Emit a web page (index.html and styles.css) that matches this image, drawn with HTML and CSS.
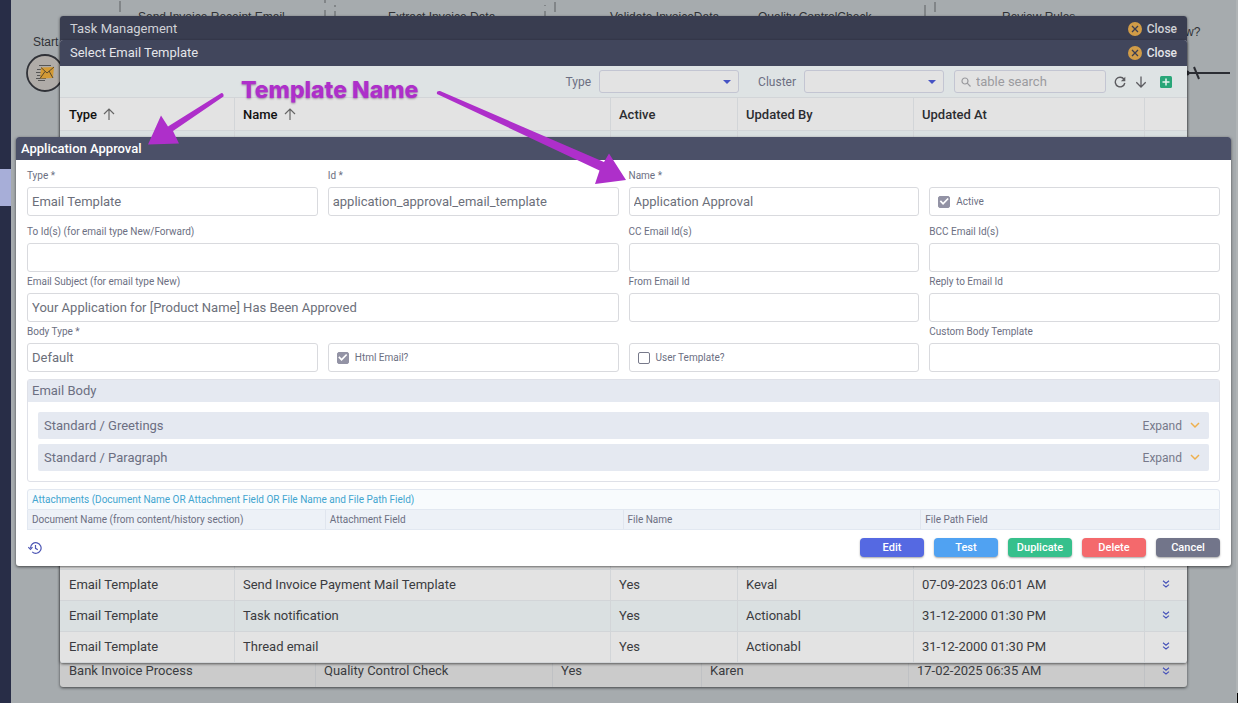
FILE: index.html
```html
<!DOCTYPE html>
<html lang="en">

<head>
    <meta charset="UTF-8">
    <meta name="viewport" content="width=device-width, initial-scale=1.0">
    <title>Application Approval</title>
    <link rel="stylesheet" href="styles.css">
</head>

<body>
    <!-- Shared icons -->
    <svg class="icon-defs" aria-hidden="true">
        <symbol id="icon-close" viewBox="0 0 14 14">
            <circle cx="7" cy="7" r="7" fill="#d19c47" />
            <path d="M4 4l6 6M10 4l-6 6" stroke="#3a3d50" stroke-width="1.3" />
        </symbol>
        <symbol id="icon-up" viewBox="0 0 12 12">
            <path d="M6 12V1M1 6l5-5 5 5" fill="none" stroke="#666" stroke-width="1.2" />
        </symbol>
        <symbol id="icon-more" viewBox="0 0 8 8">
            <path d="M1 .8l3 2.4L7 .8M1 4.6L4 7l3-2.4" fill="none" stroke="#4450b8" stroke-width="1.1" />
        </symbol>
        <symbol id="icon-chevron" viewBox="0 0 10 7">
            <path d="M1 1l4 4 4-4" fill="none" stroke="#eeb04d" stroke-width="1.5" />
        </symbol>
        <symbol id="icon-caret" viewBox="0 0 8 4">
            <path d="M0 0h8L4 4z" fill="#4653c4" />
        </symbol>
    </svg>

    <!-- Workflow page behind the dialogs -->
    <div class="page">
        <nav class="sidebar">
            <a href="#" class="sidebar-active" aria-label="Workflows"></a>
        </nav>
        <main class="canvas">
            <svg class="flow" width="1225" height="120">
                <g stroke="#75797c" stroke-width="1.5">
                    <path d="M109 1v11M314 0v3M314 10v6M324 5v2M324 11v5M534 5v1M534 11v5M544 2v10M914 5v11M924 2v10" />
                </g>
                <text x="127" y="21">Send Invoice Receipt Email</text>
                <text x="377" y="21">Extract Invoice Data</text>
                <text x="599" y="21">Validate InvoiceData</text>
                <text x="747" y="21">Quality ControlCheck</text>
                <text x="991" y="21">Review Rules</text>
                <text x="22" y="46">Start</text>
                <text x="1174" y="36">w?</text>
                <circle cx="34" cy="73" r="18" fill="#b0aca8" stroke="#303238" stroke-width="1.8" />
                <path d="M28 65.500h12M26 69.500h5M25 72.500h6M26 75.500h5M25 78.500h10M27 80.500h7" stroke="#555" />
                <path d="M30 67.500l13-.5-1 11-13 .5z" fill="#d39a35" />
                <path d="M30 67.500l6 5.500 7-6M29 78.500l5-7M42 78l-4-7" fill="none" stroke="#4b3f2c" stroke-width=".9" />
                <path d="M1173 73h46" stroke="#2b2d33" stroke-width="2" />
                <path d="M1183 67l5 12" stroke="#2b2d33" stroke-width="2" />
                <circle cx="1176" cy="73" r="2.500" fill="#2b2d33" />
            </svg>
        </main>
    </div>

    <!-- Task management dialog -->
    <section class="modal modal-task">
        <header class="modal-header">
            <h2>Task Management</h2>
            <button type="button" class="close-btn"><svg width="14" height="14"><use href="#icon-close" /></svg>Close</button>
        </header>
        <div class="modal-fill"></div>
        <table class="data-table task-table">
            <colgroup>
                <col class="task-process">
                <col class="task-name">
                <col class="task-active">
                <col class="task-user">
                <col>
                <col class="col-more">
            </colgroup>
            <tbody>
                <tr>
                    <td>Bank Invoice Process</td>
                    <td>Quality Control Check</td>
                    <td>Yes</td>
                    <td>Karen</td>
                    <td>17-02-2025 06:35 AM</td>
                    <td class="more"><svg width="8" height="8"><use href="#icon-more" /></svg></td>
                </tr>
            </tbody>
        </table>
    </section>

    <!-- Email template list dialog -->
    <section class="modal modal-list">
        <header class="modal-header">
            <h2>Select Email Template</h2>
            <button type="button" class="close-btn"><svg width="14" height="14"><use href="#icon-close" /></svg>Close</button>
        </header>
        <div class="toolbar">
            <label for="filter-type">Type</label>
            <div class="select-box">
                <select id="filter-type"><option></option></select>
                <svg width="8" height="4"><use href="#icon-caret" /></svg>
            </div>
            <label for="filter-cluster" class="label-cluster">Cluster</label>
            <div class="select-box">
                <select id="filter-cluster"><option></option></select>
                <svg width="8" height="4"><use href="#icon-caret" /></svg>
            </div>
            <div class="search-box">
                <svg width="10" height="10" viewBox="0 0 10 10"><circle cx="4" cy="4" r="3" fill="none" stroke="#9a9a9e" stroke-width="1.200" /><path d="M6.200 6.200L9.500 9.500" stroke="#9a9a9e" stroke-width="1.200" /></svg>
                <input type="search" placeholder="table search" aria-label="table search">
            </div>
            <div class="tools">
                <button type="button" aria-label="Refresh"><svg width="12" height="12" viewBox="0 0 12 12"><path d="M10 3.200A4.800 4.800 0 1 0 10.800 7" fill="none" stroke="#5c5c60" stroke-width="1.400" /><path d="M11.300.8v4.400H6.900z" fill="#5c5c60" /></svg></button>
                <button type="button" aria-label="Download"><svg width="12" height="12" viewBox="0 0 12 12"><path d="M6 .5v10.500M1.300 6.300L6 11l4.700-4.700" fill="none" stroke="#5c5c60" stroke-width="1.300" /></svg></button>
                <button type="button" class="add-btn" aria-label="Add"><svg width="12" height="12" viewBox="0 0 12 12"><rect width="12" height="12" rx="1.500" fill="#29a678" /><path d="M6 2.500v7M2.500 6h7" stroke="#e8f3ee" stroke-width="1.500" /></svg></button>
            </div>
        </div>
        <table class="data-table list-table">
            <colgroup>
                <col class="list-type">
                <col>
                <col class="list-active">
                <col class="list-user">
                <col class="list-date">
                <col class="col-more">
            </colgroup>
            <thead>
                <tr>
                    <th class="sorted">Type <svg width="12" height="12"><use href="#icon-up" /></svg></th>
                    <th class="sorted">Name <svg width="12" height="12"><use href="#icon-up" /></svg></th>
                    <th>Active</th>
                    <th>Updated By</th>
                    <th>Updated At</th>
                    <th></th>
                </tr>
            </thead>
            <tbody>
                <tr class="striped"><td></td><td></td><td></td><td></td><td></td><td></td></tr>
                <tr class="filler"><td></td><td></td><td></td><td></td><td></td><td></td></tr>
                <tr>
                    <td>Email Template</td>
                    <td>Send Invoice Payment Mail Template</td>
                    <td>Yes</td>
                    <td>Keval</td>
                    <td>07-09-2023 06:01 AM</td>
                    <td class="more"><svg width="8" height="8"><use href="#icon-more" /></svg></td>
                </tr>
                <tr class="striped">
                    <td>Email Template</td>
                    <td>Task notification</td>
                    <td>Yes</td>
                    <td>Actionabl</td>
                    <td>31-12-2000 01:30 PM</td>
                    <td class="more"><svg width="8" height="8"><use href="#icon-more" /></svg></td>
                </tr>
                <tr>
                    <td>Email Template</td>
                    <td>Thread email</td>
                    <td>Yes</td>
                    <td>Actionabl</td>
                    <td>31-12-2000 01:30 PM</td>
                    <td class="more"><svg width="8" height="8"><use href="#icon-more" /></svg></td>
                </tr>
            </tbody>
        </table>
    </section>

    <!-- Template details dialog -->
    <section class="modal modal-details">
        <header class="modal-header">
            <h2>Application Approval</h2>
        </header>
        <form class="details-form">
            <div class="row row-first">
                <div class="field">
                    <label for="type">Type *</label>
                    <input type="text" id="type" value="Email Template" readonly>
                </div>
                <div class="field">
                    <label for="template-id">Id *</label>
                    <input type="text" id="template-id" value="application_approval_email_template" readonly>
                </div>
                <div class="field">
                    <label for="name">Name *</label>
                    <input type="text" id="name" value="Application Approval" readonly>
                </div>
                <label class="check-field"><input type="checkbox" checked>Active</label>
            </div>
            <div class="row">
                <div class="field wide">
                    <label for="to">To Id(s) (for email type New/Forward)</label>
                    <input type="text" id="to" readonly>
                </div>
                <div class="field">
                    <label for="cc">CC Email Id(s)</label>
                    <input type="text" id="cc" readonly>
                </div>
                <div class="field">
                    <label for="bcc">BCC Email Id(s)</label>
                    <input type="text" id="bcc" readonly>
                </div>
            </div>
            <div class="row">
                <div class="field wide">
                    <label for="subject">Email Subject (for email type New)</label>
                    <input type="text" id="subject" value="Your Application for [Product Name] Has Been Approved" readonly>
                </div>
                <div class="field">
                    <label for="from">From Email Id</label>
                    <input type="text" id="from" readonly>
                </div>
                <div class="field">
                    <label for="reply">Reply to Email Id</label>
                    <input type="text" id="reply" readonly>
                </div>
            </div>
            <div class="row">
                <div class="field">
                    <label for="body-type">Body Type *</label>
                    <input type="text" id="body-type" value="Default" readonly>
                </div>
                <label class="check-field"><input type="checkbox" checked>Html Email?</label>
                <label class="check-field"><input type="checkbox">User Template?</label>
                <div class="field">
                    <label for="custom-body">Custom Body Template</label>
                    <input type="text" id="custom-body" readonly>
                </div>
            </div>

            <div class="email-body">
                <h3>Email Body</h3>
                <div class="block">
                    <span>Standard / Greetings</span>
                    <button type="button">Expand<svg width="10" height="7"><use href="#icon-chevron" /></svg></button>
                </div>
                <div class="block">
                    <span>Standard / Paragraph</span>
                    <button type="button">Expand<svg width="10" height="7"><use href="#icon-chevron" /></svg></button>
                </div>
            </div>

            <table class="attachments">
                <caption>Attachments (Document Name OR Attachment Field OR File Name and File Path Field)</caption>
                <thead>
                    <tr>
                        <th>Document Name (from content/history section)</th>
                        <th>Attachment Field</th>
                        <th>File Name</th>
                        <th>File Path Field</th>
                    </tr>
                </thead>
            </table>

            <footer class="actions">
                <button type="button" class="history-btn" aria-label="History"><svg width="14" height="12" viewBox="0 0 14 12"><path d="M2.500 6a5.300 5.300 0 1 1 1.700 3.900M.3 5.200l2.200 2.200 2-2.200M7.500 3v3.300l2.300 1.400" fill="none" stroke="#4f58b5" stroke-width="1.200" /></svg></button>
                <button type="button" class="btn btn-edit">Edit</button>
                <button type="button" class="btn btn-test">Test</button>
                <button type="button" class="btn btn-duplicate">Duplicate</button>
                <button type="button" class="btn btn-delete">Delete</button>
                <button type="button" class="btn btn-cancel">Cancel</button>
            </footer>
        </form>
    </section>

    <!-- Callout over the dialogs -->
    <div class="callout">
        <strong>Template Name</strong>
        <svg width="640" height="190">
            <path d="M221.500 93Q224 93 223.500 96.500L173 131 179 143.500 148 144.500 161 115.500 168 126.500z" />
            <path d="M437 94Q436 90.500 440 91L604 162 609 153.500 626 180 595 184 599.500 170.500z" />
        </svg>
    </div>
</body>

</html>
```
FILE: styles.css
```css
/* General */
* {
    box-sizing: border-box;
}

body {
    font-family: Roboto, "Liberation Sans", sans-serif;
    font-size: 13px;
    color: #6c6f82;
    margin: 0;
    height: 100vh;
    overflow: hidden;
    position: relative;
}

h2,
h3 {
    margin: 0;
    font-size: 13px;
    font-weight: 400;
}

button,
input,
select {
    font-family: inherit;
}

button {
    border: none;
    background: none;
    padding: 0;
    cursor: pointer;
}

svg {
    display: block;
}

.icon-defs {
    display: none;
}

/* Page behind */
.page {
    display: flex;
    height: 100%;
}

.page::after {
    content: "";
    position: absolute;
    right: 0;
    bottom: 0;
    width: 1px;
    height: 10px;
    background-color: #000;
}

.sidebar {
    width: 11px;
    padding-top: 169px;
    background-color: #282d47;
}

.sidebar-active {
    display: block;
    height: 37px;
    background-color: #a7aed8;
}

.canvas {
    flex: 1;
    overflow: hidden;
    border-right: 2px solid #b0b4b6;
    background-color: #a6abae;
}

.flow text {
    font-family: "Liberation Sans", Arial, sans-serif;
    font-size: 12px;
    fill: #303236;
}

/* Dialogs */
.modal {
    position: absolute;
    display: flex;
    flex-direction: column;
    border-radius: 3px;
    overflow: hidden;
    box-shadow: 0 1px 3px rgba(0, 0, 0, 0.6);
}

.modal-task {
    top: 16px;
    left: 60px;
    right: 51px;
    bottom: 16px;
    background-color: #cbcbcb;
}

.modal-list {
    top: 40px;
    left: 60px;
    right: 51px;
    bottom: 40px;
    background-color: #e3e3e3;
}

.modal-details {
    top: 137px;
    left: 16px;
    right: 7px;
    background-color: #fff;
}

.modal-header {
    display: flex;
    justify-content: space-between;
    align-items: center;
    height: 26px;
    padding: 0 10px;
    color: #e4e5ea;
    background-color: #41465c;
}

.modal-header h2 {
    padding-bottom: 1px;
}

.modal-task .modal-header {
    color: #d0d1d6;
    background-color: #393d50;
}

.modal-details .modal-header {
    height: 23px;
    padding: 0 5px;
    color: #fff;
    background-color: #4b5068;
}

.modal-details h2 {
    padding-bottom: 0;
    font-weight: 500;
}

.close-btn {
    display: flex;
    align-items: center;
    gap: 5px;
    font-size: 12px;
    font-weight: 500;
    color: inherit;
}

.modal-fill {
    flex: 1;
}

/* Toolbar */
.toolbar {
    display: flex;
    justify-content: flex-end;
    align-items: center;
    height: 31px;
    padding-right: 15px;
    background-color: #dee3e4;
}

.toolbar label {
    font-size: 12px;
}

.toolbar .label-cluster {
    margin-left: 19px;
}

.select-box {
    position: relative;
    margin-left: 8px;
}

.select-box select {
    display: block;
    appearance: none;
    width: 140px;
    height: 23px;
    border: 1px solid #c3c5d2;
    border-radius: 3px;
    background-color: #e3e3e3;
}

.select-box svg {
    position: absolute;
    top: 10px;
    right: 8px;
    pointer-events: none;
}

.search-box {
    display: flex;
    align-items: center;
    gap: 5px;
    width: 152px;
    height: 23px;
    margin-left: 10px;
    padding-left: 6px;
    border: 1px solid #c3c5d2;
    border-radius: 3px;
    background-color: #e3e3e3;
}

.search-box input {
    width: 120px;
    padding: 0;
    border: none;
    outline: none;
    background: none;
    font-size: 13px;
}

.search-box input::placeholder {
    color: #9b9b9f;
}

.tools {
    display: flex;
    gap: 9px;
    margin-left: 8px;
}

.add-btn {
    margin-left: 4px;
}

/* Tables */
.data-table {
    width: 100%;
    table-layout: fixed;
    border-collapse: separate;
    border-spacing: 0;
    color: #3a3b40;
}

.data-table th,
.data-table td {
    height: 31px;
    padding: 0 8px;
    border-right: 1px solid #d2d5d8;
    border-bottom: 1px solid #d2d5d8;
    text-align: left;
}

.data-table td {
    padding-bottom: 2px;
}

.data-table th {
    height: 34px;
    border-top: 1px solid #d2d5d8;
    font-weight: 500;
    color: #2c2d31;
}

.data-table tr > :first-child {
    padding-left: 9px;
}

.data-table tr > :last-child {
    border-right: none;
}

.data-table .sorted {
    color: #111;
}

.data-table .sorted svg {
    display: inline-block;
    margin-left: 3px;
    vertical-align: -1px;
}

.data-table .more svg {
    margin: 0 auto;
}

.striped {
    background-color: #dae0e1;
}

.list-table {
    flex: 1;
}

.list-table .filler td {
    height: auto;
}

.list-type {
    width: 175px;
}

.list-active {
    width: 127px;
}

.list-user {
    width: 176px;
}

.list-date {
    width: 231px;
}

.col-more {
    width: 42px;
}

.task-table td {
    border-bottom: none;
    border-color: #bfc1c4;
}

.task-process {
    width: 256px;
}

.task-name {
    width: 237px;
}

.task-active {
    width: 149px;
}

.task-user {
    width: 207px;
}

/* Details form */
.details-form {
    padding: 10px 11px 9px;
}

.row {
    display: grid;
    grid-template-columns: repeat(4, 1fr);
    gap: 10px;
    align-items: end;
    margin-bottom: 4px;
}

.row-first {
    margin-bottom: 10px;
}

.field {
    display: flex;
    flex-direction: column;
    gap: 5px;
    min-width: 0;
}

.wide {
    grid-column: span 2;
}

.field label {
    font-size: 10px;
    line-height: 12px;
}

.field input,
.check-field {
    width: 100%;
    height: 29px;
    border: 1px solid #d9dade;
    border-radius: 3px;
}

.field input {
    padding: 0 4px;
    font-size: 13px;
    color: #6c6f7a;
    outline: none;
}

.check-field {
    display: flex;
    align-items: center;
    gap: 6px;
    padding-left: 8px;
    font-size: 10px;
}

.check-field input {
    appearance: none;
    display: grid;
    place-items: center;
    width: 12px;
    height: 12px;
    margin: 0;
    border: 1px solid #77798a;
    border-radius: 2px;
}

.check-field input:checked {
    border-color: #9393a5;
    background-color: #9393a5;
}

.check-field input:checked::after {
    content: "";
    width: 10px;
    height: 10px;
    background-color: #fff;
    clip-path: polygon(5% 50%, 17% 38%, 38% 60%, 83% 14%, 95% 26%, 38% 84%);
}

/* Email body */
.email-body {
    margin-top: 7px;
    padding-bottom: 10px;
    border: 1px solid #dfe1e8;
    border-radius: 3px;
}

.email-body h3 {
    margin-bottom: 10px;
    padding-left: 4px;
    line-height: 22px;
    background-color: #e5e9f1;
}

.block {
    display: flex;
    justify-content: space-between;
    align-items: center;
    height: 27px;
    margin: 0 10px 5px;
    padding: 0 9px 0 6px;
    border-radius: 2px;
    background-color: #e5e9f1;
}

.block:last-child {
    margin-bottom: 0;
}

.block button {
    display: flex;
    align-items: center;
    gap: 8px;
    font-size: 12px;
    color: #77798b;
}

/* Attachments */
.attachments {
    width: 100%;
    margin-top: 7px;
    table-layout: fixed;
    border-spacing: 0;
    border: 1px solid #e2e8f1;
    border-top: none;
    font-size: 10px;
    background-color: #edf1f7;
}

.attachments caption {
    padding-left: 4px;
    border: 1px solid #e2e8f1;
    border-radius: 3px 3px 0 0;
    line-height: 19px;
    text-align: left;
    color: #42a5d0;
    background-color: #f8fbfd;
}

.attachments th {
    height: 19px;
    padding: 0 4px;
    border-right: 1px solid #e0e5ee;
    font-weight: 400;
    text-align: left;
}

.attachments th:last-child {
    border-right: none;
}

/* Actions */
.actions {
    display: flex;
    align-items: center;
    gap: 10px;
    margin-top: 8px;
}

.history-btn {
    margin-right: auto;
    padding-left: 1px;
}

.btn {
    width: 64px;
    height: 19px;
    border-radius: 4px;
    font-size: 11px;
    font-weight: 500;
    color: #fff;
    box-shadow: 0 1px 2px rgba(0, 0, 0, 0.35);
}

.btn-edit {
    background-color: #5569e2;
}

.btn-test {
    background-color: #50a2f2;
}

.btn-duplicate {
    background-color: #36c08c;
}

.btn-delete {
    background-color: #f4696c;
}

.btn-cancel {
    background-color: #72758a;
}

/* Callout */
.callout {
    position: absolute;
    top: 0;
    left: 0;
    pointer-events: none;
    color: #ae2fca;
}

.callout strong {
    position: absolute;
    top: 76px;
    left: 241px;
    font-family: Inter, sans-serif;
    font-size: 23px;
    font-weight: 800;
    line-height: 28px;
    white-space: nowrap;
    text-shadow: 0 1px 2px rgba(60, 0, 70, 0.4);
}

.callout svg {
    fill: #ae2fca;
}
```
